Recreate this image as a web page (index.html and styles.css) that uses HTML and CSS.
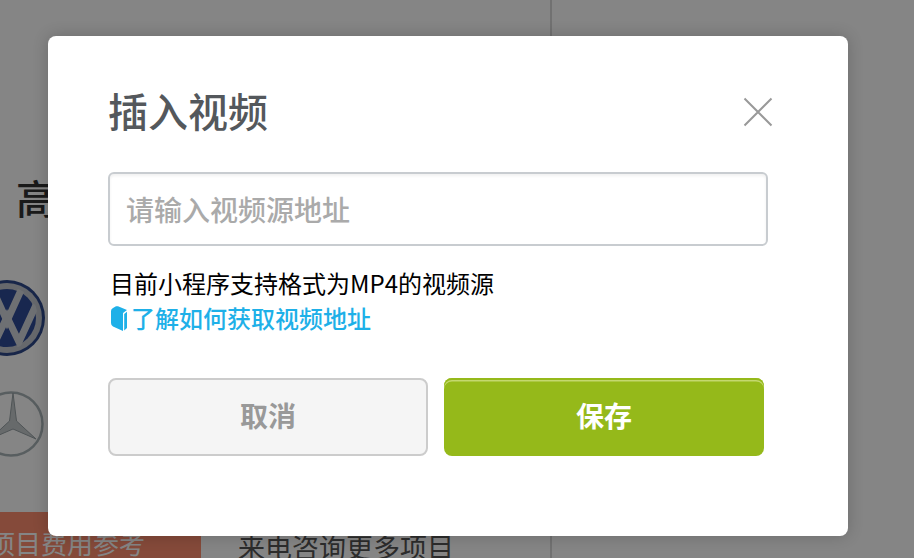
FILE: index.html
```html
<!DOCTYPE html>
<html lang="zh-CN">
<head>
<meta charset="utf-8">
<title>插入视频</title>
<link rel="stylesheet" href="styles.css">
</head>
<body>
<div class="page">
  <div class="left">
    <div class="heading">高端品牌</div>
    <div class="logos">
      <svg class="logo-vw" viewBox="-38 -38 76 76" width="76" height="76">
        <defs><clipPath id="vw-clip"><circle r="31"/></clipPath></defs>
        <circle r="38" fill="#2f4a8c"/>
        <circle r="35" fill="#c3c7cf"/>
        <circle r="29" fill="#2f4c98"/>
        <g clip-path="url(#vw-clip)" fill="none" stroke="#d4d7dd" stroke-width="7">
          <path d="M-15 -30 L0 3 L15 -30"/>
          <path d="M-29 -13 L-12 24 L0 -1 L12 24 L29 -13"/>
        </g>
      </svg>
      <svg class="logo-mb" viewBox="-33 -33 66 66" width="66" height="66">
        <circle r="31.5" fill="none" stroke="#aab4b8" stroke-width="2.5"/>
        <path d="M2 -31 L5.5 -3 L25 15 L2 5 L-21 15 L-1.5 -3 Z" fill="#c6cbcd" stroke="#98a2a6" stroke-width="1"/>
      </svg>
    </div>
    <div class="tag">项目费用参考</div>
  </div>
  <div class="center">
    <div class="more">来电咨询更多项目</div>
  </div>
  <div class="divider"></div>
</div>
<div class="overlay">
  <div class="modal">
    <div class="modal-head">
      <h2 class="title">插入视频</h2>
      <svg class="close" viewBox="0 0 30 30" width="30" height="30"><path d="M1.5 1.5 L28.5 28.5 M28.5 1.5 L1.5 28.5" fill="none" stroke="#999" stroke-width="2"/></svg>
    </div>
    <input class="field" type="text" placeholder="请输入视频源地址">
    <p class="hint">目前小程序支持格式为MP4的视频源</p>
    <a class="link" href="#">
      <svg class="book" viewBox="0 0 16 25" width="16" height="25"><path d="M0 5 Q0 3 2 2 L5 0.3 Q6 0 7 0.3 L16 4 L12 7 L12 25 L2 20.5 Q0 19.5 0 17 Z" fill="#1eb0e8"/><path d="M13.2 8 L16 5.8 L16 22 L13.2 24.6 Z" fill="#1eb0e8"/></svg>了解如何获取视频地址
    </a>
    <div class="actions">
      <button class="btn btn-cancel" type="button">取消</button>
      <button class="btn btn-save" type="button">保存</button>
    </div>
  </div>
</div>
</body>
</html>
```
FILE: styles.css
```css
* { box-sizing: border-box; }
html, body { margin: 0; height: 100%; overflow: hidden; }
body { background: #fff; font-family: "Noto Sans CJK SC", "Noto Sans", sans-serif; }
.page { display: flex; width: 914px; height: 558px; overflow: hidden; }
.left { width: 201px; flex: none; display: flex; flex-direction: column; }
.heading { margin: 171px 0 0 16px; font-size: 40px; line-height: 52px; font-weight: 500; color: #333; white-space: nowrap; }
.logos { display: flex; flex-direction: column; margin: 57px 0 0 -31px; }
.logo-vw { display: block; }
.logo-mb { display: block; margin: 35px 0 0 9px; }
.tag { margin-top: 55px; height: 60px; flex: none; background: #ff8e70; color: #fff; font-size: 26px; line-height: 38px; padding-top: 12px; text-indent: -11px; white-space: nowrap; overflow: hidden; }
.center { width: 349px; flex: none; padding-left: 37px; }
.more { margin-top: 528px; font-size: 27px; line-height: 38px; color: #555; white-space: nowrap; }
.divider { width: 2px; flex: none; background: #d9d9d9; }
.overlay { position: absolute; inset: 0; background: rgba(0,0,0,.48); }
.modal { position: absolute; left: 48px; top: 36px; width: 800px; height: 500px; background: #fff; border-radius: 8px; padding: 48px 60px 0; box-shadow: 0 0 16px rgba(0,0,0,.2); }
.modal-head { display: flex; justify-content: space-between; align-items: center; height: 52px; }
.title { margin: 0; font-size: 40px; line-height: 52px; font-weight: 500; color: #54585c; }
.close { margin: 4px 15px 0 0; }
.field { display: block; width: 660px; height: 74px; margin-top: 36px; padding: 0 16px; border: 2px solid #c8ccd0; border-radius: 6px; background: #fff; box-shadow: inset 0 2px 3px rgba(0,0,0,.06); font: 500 28px "Noto Sans CJK SC", sans-serif; outline: none; }
.field::placeholder { color: #aaa; opacity: 1; }
.hint { margin: 21px 0 0 2px; font-size: 24px; line-height: 32px; font-weight: 400; color: #000; }
.link { display: flex; align-items: center; margin: 3px 0 0 3px; height: 32px; font-size: 24px; line-height: 32px; font-weight: 500; color: #1eb0e8; text-decoration: none; }
.book { margin-right: 4px; }
.actions { display: flex; gap: 16px; margin-top: 44px; }
.btn { width: 320px; height: 78px; border-radius: 8px; font: 700 28px "Noto Sans CJK SC", sans-serif; padding: 0 0 4px; }
.btn-cancel { border: 2px solid #ccc; background: #f5f5f5; color: #999; }
.btn-save { border: 0; background: #95b91a; color: #fff; box-shadow: inset 0 2px 0 #95b91a, inset 0 3.5px 0 #c4d86f; }
```
